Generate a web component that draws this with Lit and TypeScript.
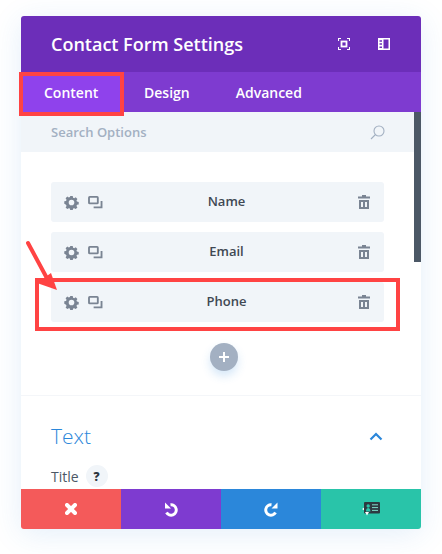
import { LitElement, html, css, svg } from "lit";
import { customElement } from "lit/decorators.js";

const gear = svg`<svg class="ic" width="15" height="15" viewBox="0 0 16 16"><path fill="#7a8493" fill-rule="evenodd" d="M6.700 1h2.600l.4 1.900 1.200.5 1.600-1 1.800 1.800-1 1.600.5 1.200 1.900.4v2.600l-1.900.4-.5 1.200 1 1.600-1.800 1.800-1.600-1-1.200.5-.4 1.900H6.700l-.4-1.900-1.200-.5-1.600 1-1.800-1.800 1-1.600-.5-1.200L.3 9.300V6.700l1.900-.4.5-1.200-1-1.600 1.800-1.800 1.600 1 1.200-.5zM8 5a3 3 0 1 0 0 6 3 3 0 0 0 0-6z"/></svg>`;
const dup = svg`<svg class="ic" width="15" height="13" viewBox="0 0 16 14"><g fill="none" stroke="#7a8493" stroke-width="2"><rect x="1" y="1" width="9.500" height="7" rx=".8"/><path d="M14.500 5.500V12.200H6"/></g></svg>`;
const trash = svg`<svg class="ic" width="12" height="14" viewBox="0 0 12 14"><path fill="#7a8493" fill-rule="evenodd" d="M4 0h4v1.500h4v2H0v-2h4zM1 5h10v9H1zm2 2v5h2V7zm4 0v5h2V7z"/></svg>`;

@customElement("app-root")
export class AppRoot extends LitElement {
  static styles = css`
    :host { display: block; width: 442px; height: 554px; position: relative; background: #fff; overflow: hidden; font-family: "Open Sans", sans-serif; }
    .wrap { padding: 16px 21px 0; }
    .panel { position: relative; height: 513px; border-radius: 3px; overflow: hidden; display: flex; flex-direction: column; background: #fff; }
    .shadow { box-shadow: 0 5px 30px rgba(43,135,218,.13); border-radius: 3px; }
    .head { flex: 0 0 56px; background: #6c2eb9; display: flex; align-items: center; padding: 0 31px 0 30px; color: #fff; }
    .head h1 { flex: 1; margin: 0; font-size: 18px; font-weight: 600; }
    .head-icons { display: flex; gap: 28px; align-items: center; }
    .ic { display: block; }
    .tabs { flex: 0 0 40px; background: #7e3bd0; display: flex; color: #fff; font-size: 14px; font-weight: 600; }
    .tab { display: flex; align-items: center; padding: 0 22px; }
    .tab.first { background: #8f42ec; width: 99px; box-sizing: border-box; padding: 0 0 0 23px; }
    .tab.mid { padding: 0 24px 0 24px; }
    .search { flex: 0 0 40px; background: #f1f5f9; display: flex; align-items: center; justify-content: space-between; padding: 0 36px 0 30px; color: #a3b0c2; font-size: 13px; font-weight: 600; }
    .body { flex: 1; min-height: 0; overflow: hidden; padding-top: 30px; }
    .rows { display: flex; flex-direction: column; gap: 10px; padding: 0 37px 0 30px; }
    .row { height: 40px; border-radius: 3px; background: #f1f5f9; display: grid; grid-template-columns: 1fr auto 1fr; align-items: center; padding: 0 14px 0 13px; font-size: 13px; font-weight: 550; color: #404853; }
    .row-left { display: flex; gap: 9px; align-items: center; }
    .row-label { margin: 0 0 2px 19px; }
    .row-right { justify-self: end; }
    .add-line { display: flex; justify-content: center; padding: 21px 0 24px 5px; }
    .add { width: 28px; height: 28px; border-radius: 50%; background: #a3b0c2; box-shadow: 0 5px 10px rgba(43,135,218,.2); display: flex; align-items: center; justify-content: center; }
    .section { border-top: 1px solid #f4f6f9; padding: 26px 37px 0 30px; }
    .sec-head { display: flex; justify-content: space-between; align-items: center; color: #2b87da; font-size: 21px; font-weight: 300; line-height: 28px; }
    .sec-head svg { margin-right: 1px; }
    .field { display: flex; align-items: center; gap: 7px; margin-top: 15px; font-size: 14px; font-weight: 500; color: #4c5866; }
    .help { width: 22px; height: 22px; border-radius: 50%; background: #f1f5f9; color: #2e3640; font-size: 12px; font-weight: 800; display: flex; align-items: center; justify-content: center; }
    .foot { flex: 0 0 40px; display: grid; grid-template-columns: repeat(4, 1fr); }
    .foot div { display: flex; align-items: center; justify-content: center; }
    .f1 { background: #f45a5a; } .f2 { background: #7e3bd0; } .f3 { background: #2b87da; } .f4 { background: #29c4a9; }
    .scroll { position: absolute; right: 0; top: 96px; width: 7px; height: 150px; background: #4c5866; }
    .mark { position: absolute; border: 4px solid #ff4343; box-sizing: border-box; pointer-events: none; }
    .m1 { left: 19px; top: 72px; width: 105px; height: 44px; }
    .m2 { left: 35px; top: 278px; width: 365px; height: 53px; }
    .arrow { position: absolute; left: 24px; top: 238px; pointer-events: none; }
  `;

  render() {
    const row = (n: string) => html`<div class="row"><div class="row-left">${gear}${dup}</div><div class="row-label">${n}</div><div class="row-right">${trash}</div></div>`;
    return html`
      <div class="wrap"><div class="shadow"><div class="panel">
        <div class="head">
          <h1>Contact Form Settings</h1>
          <div class="head-icons">
            <svg class="ic" width="12" height="12" viewBox="0 0 12 12"><path fill="none" stroke="#fff" stroke-width="1.100" d="M.5 3V.5H3M9 .5h2.500V3M11.500 9v2.500H9M3 11.500H.5V9"/><rect x="3.500" y="3.500" width="5" height="5" fill="none" stroke="#fff" stroke-width="1.800"/></svg>
            <svg class="ic" width="12" height="12" viewBox="0 0 12 12"><path fill="#fff" fill-rule="evenodd" d="M0 0h12v12H0zM5.500 1.500V10.500H10.500V1.500zM1.500 2.200v1.500H4V2.200zm0 3.100v1.500H4V5.300zm0 3.100v1.500H4V8.400z"/></svg>
          </div>
        </div>
        <div class="tabs">
          <div class="tab first">Content</div>
          <div class="tab mid">Design</div>
          <div class="tab">Advanced</div>
        </div>
        <div class="search">
          <span>Search Options</span>
          <svg class="ic" width="15" height="15" viewBox="0 0 15 15"><g fill="none" stroke="#a3b0c2" stroke-width="1.100"><circle cx="9" cy="6" r="5"/><path d="M5.500 9.500L1 14"/></g></svg>
        </div>
        <div class="body">
          <div class="rows">${row("Name")}${row("Email")}${row("Phone")}</div>
          <div class="add-line"><div class="add">
            <svg class="ic" width="10" height="10" viewBox="0 0 10 10"><path d="M5 0v10M0 5h10" stroke="#fff" stroke-width="2"/></svg>
          </div></div>
          <div class="section">
            <div class="sec-head"><span>Text</span>
              <svg class="ic" width="14" height="9" viewBox="0 0 14 9"><path d="M1.500 7.500L7 2l5.500 5.500" fill="none" stroke="#2b87da" stroke-width="2.200"/></svg>
            </div>
            <div class="field"><span>Title</span><span class="help">?</span></div>
          </div>
        </div>
        <div class="foot">
          <div class="f1"><svg class="ic" width="12" height="12" viewBox="0 0 12 12"><path d="M2 2l8 8M10 2l-8 8" stroke="#fff" stroke-width="4" stroke-linecap="round"/></svg></div>
          <div class="f2"><svg class="ic" width="16" height="16" viewBox="0 0 16 16"><path d="M7.500 3.800A5.200 5.200 0 1 1 3.500 11.500" fill="none" stroke="#fff" stroke-width="3"/><path d="M2 1.500V7.500H8z" fill="#fff"/></svg></div>
          <div class="f3"><svg class="ic" width="16" height="16" viewBox="0 0 16 16"><path d="M8.500 3.800A5.200 5.200 0 1 0 12.500 11.500" fill="none" stroke="#fff" stroke-width="3"/><path d="M14.500 1.500V7.500H8.500z" fill="#fff"/></svg></div>
          <div class="f4"><svg class="ic" width="18" height="15" viewBox="0 0 18 15"><path fill="#2d3940" d="M2 1Q2 0 3 0h14q1 0 1 1v9.500q0 1-1 1H3q-1 0-1-1z"/><g fill="#29c4a9"><circle cx="6.200" cy="4" r="1.700"/><path d="M4 9.500q0-3.500 2.200-3.500t2.200 3.500z"/></g><path d="M10 2.800h6M10 5.600h6M10 8.400h6" stroke="#7fdcc9" stroke-width="1"/><path d="M0 7l2-1.200v2.400zM3 10h4l-2 3.500z" fill="#fff"/></svg></div>
        </div>
        <div class="scroll"></div>
      </div></div></div>
      <div class="mark m1"></div>
      <div class="mark m2"></div>
      <svg class="arrow" width="40" height="60" viewBox="0 0 40 60"><path d="M4 5L25 44" stroke="#ff4343" stroke-width="4" stroke-linecap="round"/><path d="M33 52L13 45 27 35z" fill="#ff4343"/></svg>
    `;
  }
}
